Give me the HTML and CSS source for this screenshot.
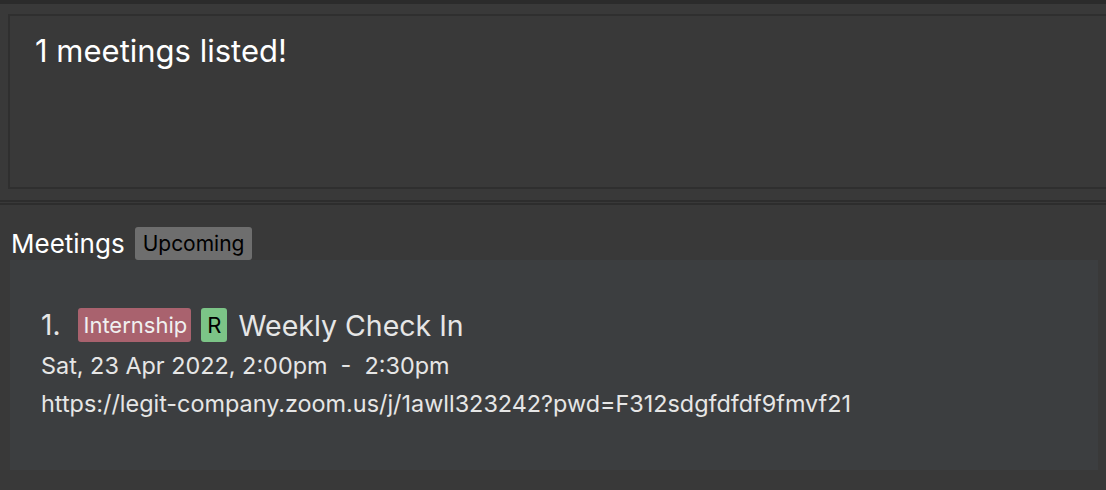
FILE: index.html
```html
<!DOCTYPE html>
<html>
<head>
<meta charset="utf-8">
<link rel="stylesheet" href="styles.css">
</head>
<body>
<div class="topbar"></div>
<div class="result-pane">
  <div class="result-box">1 meetings listed!</div>
</div>
<div class="divider"><div class="line"></div><div class="line"></div></div>
<div class="list-pane">
  <div class="list-header">
    <span class="list-title">Meetings</span>
    <span class="badge-upcoming">Upcoming</span>
  </div>
  <div class="card">
    <div class="card-title">
      <span class="index">1.</span>
      <span class="tag">Internship</span>
      <span class="recur">R</span>
      <span class="name">Weekly Check In</span>
    </div>
    <div class="card-line first">Sat, 23 Apr 2022, 2:00pm&nbsp; -&nbsp; 2:30pm</div>
    <div class="card-line">https://legit-company.zoom.us/j/1awll323242?pwd=F312sdgfdfdf9fmvf21</div>
  </div>
</div>
</body>
</html>
```
FILE: styles.css
```css
html, body {
  margin: 0;
  padding: 0;
  background: #393939;
  font-family: Inter, "Open Sans", sans-serif;
  color: #ffffff;
  overflow: hidden;
}
.topbar {
  height: 4px;
  background: #2b2b2b;
}
.result-pane {
  padding: 10px 0 0 8px;
}
.result-box {
  box-sizing: border-box;
  height: 175px;
  border: 2px solid #2f2f2f;
  border-right: none;
  padding: 17px 0 0 25px;
  font-size: 31px;
  line-height: 36px;
  color: #ffffff;
}
.divider {
  padding-top: 11px;
}
.divider .line {
  height: 2px;
  background: #2d2d2d;
}
.divider .line + .line {
  margin-top: 1px;
}
.list-pane {
  padding: 22px 8px 0 10px;
}
.list-header {
  display: flex;
  align-items: center;
  gap: 10px;
  height: 33px;
  margin-left: 1px;
}
.list-title {
  font-size: 26px;
}
.badge-upcoming {
  background: #6e6e6e;
  color: #000;
  font-size: 21px;
  line-height: 25px;
  border-radius: 3px;
  padding: 4px 8px 4px 8px;
}
.card {
  background: #3c3e40;
  height: 210px;
  padding: 48px 0 0 31px;
  box-sizing: border-box;
}
.card-title {
  display: flex;
  align-items: center;
  height: 34px;
  margin-bottom: 5px;
}
.index {
  font-size: 28px;
  color: #e6e6e6;
  margin-right: 18px;
}
.tag {
  background: #a9626e;
  color: #f0f0f0;
  font-size: 22px;
  line-height: 26px;
  border-radius: 3px;
  padding: 4px 4px 4px 5px;
  margin-right: 10px;
}
.recur {
  background: #7cc487;
  color: #000;
  font-size: 22px;
  line-height: 26px;
  border-radius: 3px;
  padding: 4px 6px;
  margin-right: 11px;
}
.name {
  font-size: 28.5px;
  color: #e6e6e6;
}
.card-line {
  font-size: 23.4px;
  line-height: 38px;
  color: #e6e6e6;
}
```
